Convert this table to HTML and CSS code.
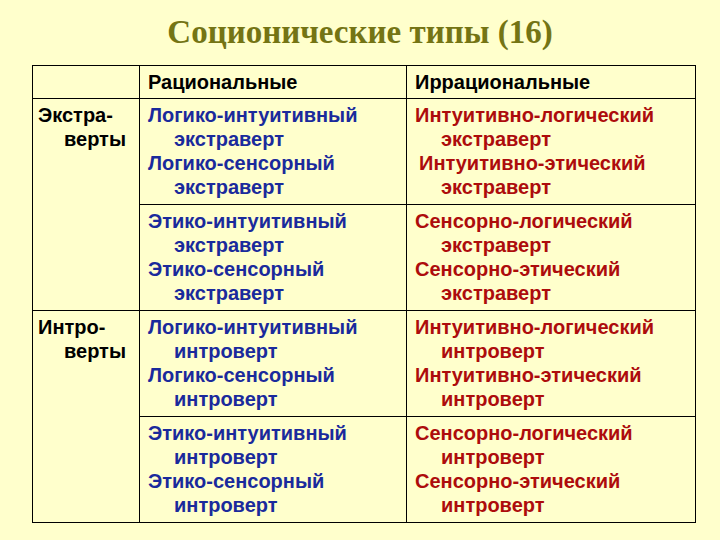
FILE: index.html
```html
<!DOCTYPE html>
<html lang="ru">
<head>
<meta charset="utf-8">
<title>Соционические типы (16)</title>
<link rel="stylesheet" href="styles.css">
</head>
<body>
<h1 class="title">Соционические типы (16)</h1>
<table class="grid">
  <colgroup>
    <col class="c-label">
    <col class="c-rat">
    <col class="c-irr">
  </colgroup>
  <tr class="head">
    <td></td>
    <td>Рациональные</td>
    <td>Иррациональные</td>
  </tr>
  <tr>
    <td class="label" rowspan="2"><span class="ln">Экстра-</span><span class="ln ind">верты</span></td>
    <td class="rat"><span class="ln">Логико-интуитивный</span><span class="ln ind">экстраверт</span><span class="ln">Логико-сенсорный</span><span class="ln ind">экстраверт</span></td>
    <td class="irr"><span class="ln">Интуитивно-логический</span><span class="ln ind">экстраверт</span><span class="ln sp">Интуитивно-этический</span><span class="ln ind">экстраверт</span></td>
  </tr>
  <tr>
    <td class="rat"><span class="ln">Этико-интуитивный</span><span class="ln ind">экстраверт</span><span class="ln">Этико-сенсорный</span><span class="ln ind">экстраверт</span></td>
    <td class="irr"><span class="ln">Сенсорно-логический</span><span class="ln ind">экстраверт</span><span class="ln">Сенсорно-этический</span><span class="ln ind">экстраверт</span></td>
  </tr>
  <tr>
    <td class="label" rowspan="2"><span class="ln">Интро-</span><span class="ln ind">верты</span></td>
    <td class="rat"><span class="ln">Логико-интуитивный</span><span class="ln ind">интроверт</span><span class="ln">Логико-сенсорный</span><span class="ln ind">интроверт</span></td>
    <td class="irr"><span class="ln">Интуитивно-логический</span><span class="ln ind">интроверт</span><span class="ln">Интуитивно-этический</span><span class="ln ind">интроверт</span></td>
  </tr>
  <tr>
    <td class="rat"><span class="ln">Этико-интуитивный</span><span class="ln ind">интроверт</span><span class="ln">Этико-сенсорный</span><span class="ln ind">интроверт</span></td>
    <td class="irr"><span class="ln">Сенсорно-логический</span><span class="ln ind">интроверт</span><span class="ln">Сенсорно-этический</span><span class="ln ind">интроверт</span></td>
  </tr>
</table>
</body>
</html>
```

FILE: styles.css
```css
html, body {
  margin: 0;
  padding: 0;
  background: #ffffcc;
}

body {
  width: 720px;
  height: 540px;
  overflow: hidden;
  font-family: "Liberation Sans", Arial, sans-serif;
}

.title {
  margin: 0;
  padding-top: 14px;
  height: 65px;
  box-sizing: border-box;
  text-align: center;
  font-family: "Liberation Serif", "Times New Roman", serif;
  font-weight: bold;
  font-size: 33px;
  line-height: 36px;
  color: #747414;
}

.grid {
  margin-left: 32px;
  width: 663px;
  border-collapse: collapse;
  table-layout: fixed;
  font-size: 20px;
  line-height: 24px;
  font-weight: bold;
}

.c-label { width: 107px; }
.c-rat { width: 267px; }
.c-irr { width: 289px; }

.grid td {
  border: 1px solid #000;
  vertical-align: top;
  padding: 4px 8px 5px 8px;
  color: #000;
}

.grid tr.head td {
  height: 23px;
  padding-top: 4px;
  padding-bottom: 4px;
}

.grid td.label {
  padding-left: 5px;
  padding-right: 4px;
}

.grid td.rat {
  color: #1a2a9c;
}

.grid td.irr {
  color: #ad0c0c;
}

.ln {
  display: block;
  white-space: nowrap;
}

.ind {
  padding-left: 26px;
}

.sp {
  padding-left: 4px;
}
```
